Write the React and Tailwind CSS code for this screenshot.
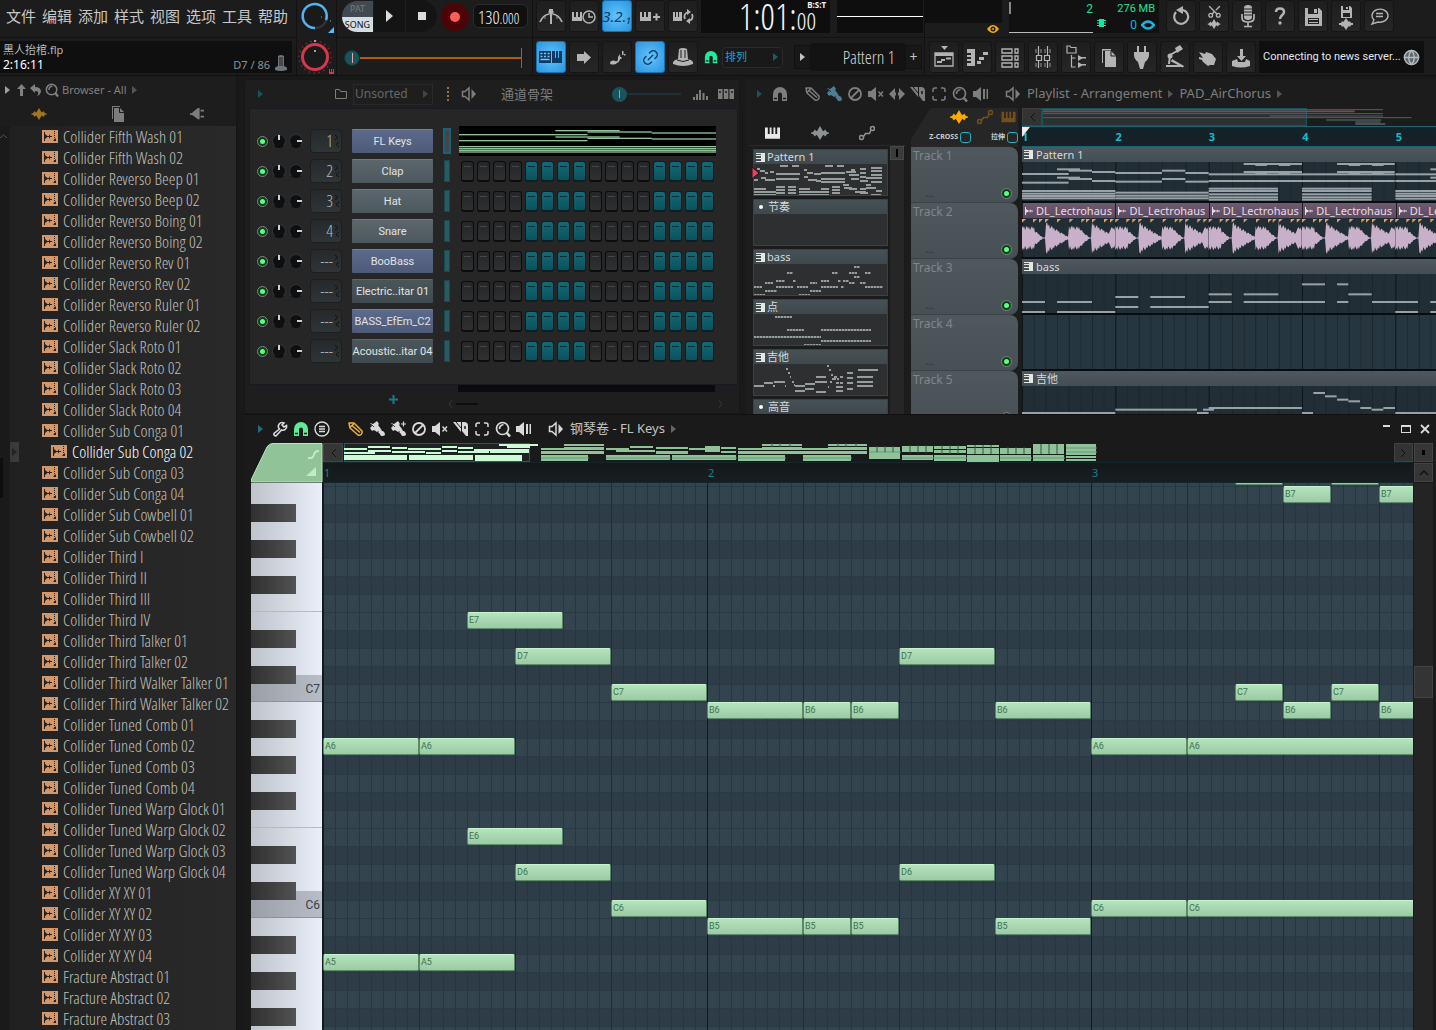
import React from "react";
import { Scissors, Link2, Globe } from "lucide-react";

const menuItems = ["文件", "编辑", "添加", "样式", "视图", "选项", "工具", "帮助"];

const samples = [
  "Collider Fifth Wash 01",
  "Collider Fifth Wash 02",
  "Collider Reverso Beep 01",
  "Collider Reverso Beep 02",
  "Collider Reverso Boing 01",
  "Collider Reverso Boing 02",
  "Collider Reverso Rev 01",
  "Collider Reverso Rev 02",
  "Collider Reverso Ruler 01",
  "Collider Reverso Ruler 02",
  "Collider Slack Roto 01",
  "Collider Slack Roto 02",
  "Collider Slack Roto 03",
  "Collider Slack Roto 04",
  "Collider Sub Conga 01",
  "Collider Sub Conga 02",
  "Collider Sub Conga 03",
  "Collider Sub Conga 04",
  "Collider Sub Cowbell 01",
  "Collider Sub Cowbell 02",
  "Collider Third I",
  "Collider Third II",
  "Collider Third III",
  "Collider Third IV",
  "Collider Third Talker 01",
  "Collider Third Talker 02",
  "Collider Third Walker Talker 01",
  "Collider Third Walker Talker 02",
  "Collider Tuned Comb 01",
  "Collider Tuned Comb 02",
  "Collider Tuned Comb 03",
  "Collider Tuned Comb 04",
  "Collider Tuned Warp Glock 01",
  "Collider Tuned Warp Glock 02",
  "Collider Tuned Warp Glock 03",
  "Collider Tuned Warp Glock 04",
  "Collider XY XY 01",
  "Collider XY XY 02",
  "Collider XY XY 03",
  "Collider XY XY 04",
  "Fracture Abstract 01",
  "Fracture Abstract 02",
  "Fracture Abstract 03",
];

const channels = [
  { no: "1", name: "FL Keys", tone: "blue", piano: true },
  { no: "2", name: "Clap", tone: "gray" },
  { no: "3", name: "Hat", tone: "gray" },
  { no: "4", name: "Snare", tone: "gray" },
  { no: "---", name: "BooBass", tone: "blue" },
  { no: "---", name: "Electric..itar 01", tone: "dark" },
  { no: "---", name: "BASS_EfEm_C2", tone: "blue" },
  { no: "---", name: "Acoustic..itar 04", tone: "dark" },
];

const tones = {
  blue: "bg-linear-to-b from-[#5c6a8b] to-[#4e5a79] border-[#7281a3]",
  gray: "bg-linear-to-b from-[#5c676d] to-[#4d585d] border-[#717c82]",
  dark: "bg-linear-to-b from-[#4b565b] to-[#3f4a4e] border-[#5c676c]",
};

const narrow =
  "font-[Open_Sans_Condensed_Light,Noto_Sans_Condensed,Roboto_Condensed,Liberation_Sans_Narrow,Roboto,sans-serif]";

// [x1, x2, y] in thirds of a pixel, a bar is 280 wide
const patternNotes = [
  [0, 140, 36], [0, 140, 62], [105, 174, 22], [105, 174, 47], [140, 210, 26], [140, 210, 51],
  [210, 280, 30], [210, 280, 57], [280, 420, 33], [280, 420, 59], [420, 490, 26], [420, 490, 51],
  [490, 560, 33], [490, 560, 59], [560, 1118, 37], [560, 1118, 57],
  [665, 840, 6], [665, 840, 30], [945, 1118, 6], [945, 1118, 30], [700, 735, 9], [770, 805, 9],
  [980, 1015, 9], [1050, 1085, 9], [700, 735, 33], [770, 805, 33], [980, 1015, 33], [1050, 1085, 33],
  [0, 280, 87], [0, 280, 95], [0, 280, 102], [0, 280, 109],
  [280, 560, 92], [280, 560, 101], [280, 560, 109],
  [560, 768, 80], [560, 768, 87], [560, 768, 97], [560, 768, 106], [560, 768, 113],
  [840, 1049, 80], [840, 1049, 87], [840, 1049, 97], [840, 1049, 106], [840, 1049, 113],
  [1120, 1400, 87], [1120, 1400, 95], [1120, 1400, 102], [1120, 1400, 110],
  [1120, 1400, 37], [1120, 1400, 57], [1225, 1400, 22], [1225, 1400, 47],
];

const bassNotes = [
  [0, 69, 84], [105, 210, 84], [0, 69, 114], [105, 280, 114],
  [280, 349, 69], [385, 489, 69], [280, 349, 99], [385, 560, 99],
  [560, 629, 61], [665, 769, 61], [560, 629, 84], [665, 909, 84],
  [840, 909, 31], [945, 979, 31], [979, 1049, 61], [945, 979, 84],
  [1050, 1188, 84], [1120, 1188, 114], [1225, 1400, 84], [1225, 1400, 114],
];

const guitarNotes = [
  [0, 280, 81], [280, 525, 71], [525, 560, 81], [543, 576, 71], [560, 840, 66],
  [840, 873, 81], [874, 909, 21], [909, 944, 31], [945, 979, 41], [979, 1014, 46],
  [1015, 1048, 66], [1049, 1084, 71], [1084, 1119, 66], [1120, 1400, 81],
];

// [x, y, width] inside the 135 x 33 thumbnails
const pickers = [
  {
    name: "Pattern 1",
    keys: true,
    thumb: [
      [26, 1, 8], [38, 1, 7], [71, 1, 8], [83, 1, 7], [3, 4, 3], [6, 6, 5], [11, 8, 3], [16, 7, 4], [22, 9, 24],
      [50, 5, 3], [53, 8, 6], [60, 9, 7], [67, 8, 24], [92, 7, 10], [95, 10, 10], [0, 15, 4], [7, 13, 5], [11, 15, 10],
      [22, 14, 23], [50, 12, 4], [54, 15, 9], [62, 16, 5], [67, 14, 24], [67, 17, 24], [89, 20, 6], [90, 23, 8],
      [0, 24, 12], [0, 27, 22], [0, 30, 22], [22, 22, 9], [22, 25, 9], [22, 28, 9], [22, 31, 9],
      [34, 22, 8], [34, 25, 8], [34, 28, 8], [34, 31, 8], [45, 24, 11], [45, 27, 22], [45, 30, 22],
      [67, 24, 8], [78, 22, 8], [67, 27, 8], [78, 25, 8], [67, 30, 8], [78, 28, 8], [78, 31, 8],
      [97, 5, 4], [97, 14, 8], [95, 24, 8], [101, 27, 11], [106, 4, 6], [106, 8, 6], [106, 12, 6], [106, 16, 8],
      [106, 24, 6], [106, 28, 8], [106, 31, 8], [117, 3, 11], [117, 6, 11], [117, 10, 11], [112, 13, 16],
      [117, 17, 11], [112, 20, 5], [112, 23, 10], [122, 26, 6], [117, 30, 10],
    ],
  },
  { name: "节奏", keys: false, thumb: [] },
  {
    name: "bass",
    keys: true,
    dashed: true,
    thumb: [
      [100, 2, 6], [33, 8, 6], [78, 8, 6], [95, 8, 8], [111, 8, 6], [100, 12, 6], [11, 18, 8], [22, 16, 9],
      [39, 16, 3], [56, 18, 7], [67, 16, 8], [84, 16, 3], [89, 16, 6], [95, 18, 6], [106, 18, 6], [0, 22, 8],
      [22, 22, 17], [43, 22, 11], [67, 22, 17], [87, 22, 3], [111, 22, 18], [11, 26, 12], [56, 26, 11], [0, 30, 11], [45, 30, 11],
    ],
  },
  {
    name: "点",
    keys: true,
    dashed: true,
    thumb: [[21, 2, 17], [33, 15, 17], [67, 15, 50], [0, 22, 67], [67, 26, 50], [50, 30, 17]],
  },
  {
    name: "吉他",
    keys: true,
    thumb: [
      [0, 21, 10], [10, 18, 9], [20, 17, 11], [19, 21, 2], [32, 4, 2], [34, 8, 2], [36, 12, 1], [31, 21, 1], [38, 17, 2], [40, 20, 1],
      [41, 21, 10], [51, 19, 10], [41, 26, 10], [51, 24, 9], [61, 17, 12], [62, 12, 10], [62, 27, 10], [73, 1, 2], [75, 5, 2],
      [77, 10, 2], [78, 14, 4], [80, 12, 3], [76, 17, 2], [83, 14, 2], [82, 18, 3], [86, 12, 3], [86, 18, 3], [82, 22, 7], [82, 26, 7],
      [78, 31, 2], [93, 8, 6], [93, 13, 6], [93, 18, 6], [93, 24, 6], [104, 5, 20], [103, 12, 16], [103, 17, 16], [103, 21, 16], [74, 22, 1],
    ],
  },
  { name: "高音", keys: false, thumb: [] },
];

// start and length in steps, row counted down from B7
const upperNotes = [
  ["A", 0, 8, 14], ["A", 8, 8, 14], ["E", 12, 8, 7], ["D", 16, 8, 9], ["C", 24, 8, 11],
  ["B", 32, 8, 12], ["B", 40, 4, 12], ["B", 44, 4, 12], ["D", 48, 8, 9], ["B", 56, 8, 12],
];
const pianoNotes = [
  ...upperNotes.map(([n, s, l, r]) => [n + (r > 11 ? 6 : 7), s, l, r]),
  ...upperNotes.map(([n, s, l, r]) => [n + (r > 11 ? 5 : 6), s, l, r + 12]),
  ["A6", 64, 8, 14],
  ["A6", 72, 24, 14],
  ["C6", 64, 8, 23],
  ["C6", 72, 24, 23],
  ["C7", 76, 4, 11],
  ["C7", 84, 4, 11],
  ["B6", 80, 4, 12],
  ["B6", 88, 4, 12],
  ["B7", 80, 4, 0],
  ["B7", 88, 4, 0],
  ["", 76, 4, -1],
  ["", 84, 4, -1],
];

const scale = ["B", "A#", "A", "G#", "G", "F#", "F", "E", "D#", "D", "C#", "C"];
const keyRows = Array.from({ length: 31 }, (_, i) => ({
  note: scale[i % 12],
  octave: 7 - Math.floor(i / 12),
}));

/* ---------- icons ---------- */

const Icon = ({ children, className = "w-4 h-4", box = "0 0 16 16" }) => (
  <svg
    viewBox={box}
    className={`shrink-0 ${className}`}
    fill="currentColor"
    stroke="none"
    aria-hidden="true"
  >
    {children}
  </svg>
);

const line = { fill: "none", stroke: "currentColor" };

const Arrow = ({ className = "text-[#666]" }) => (
  <Icon className={`w-[5px] h-2 ${className}`} box="0 0 5 8">
    <path d="M0 0l5 4-5 4z" />
  </Icon>
);

const MagnetIcon = ({ className }) => (
  <Icon className={className}>
    <path d="M1 15V8a7 7 0 0 1 14 0v7h-5V8.500a2 2 0 0 0-4 0V15z" />
    <path d="M2 12.500h3M11 12.500h3" stroke="#1c1c1c" strokeWidth="1.500" />
  </Icon>
);

const PencilIcon = () => (
  <Icon>
    <g {...line} strokeWidth="1.500" strokeLinejoin="round">
      <path d="M1 2l1 5 8 7c2 1 5-1 4-4L6 2z" />
      <path d="M4 4.500l8 7M2 6.500l4-4" />
    </g>
  </Icon>
);

const BrushIcon = ({ plus }) => (
  <Icon>
    <path d="M1 2l3 1 4-3 2 3-1 1 3 4-4 3-3-2-2 1-2-3 2-2zM9 11l3-3 1 2c2 0 3 2 3 4-2 2-5 1-5-1z" />
    <path d="M9.500 8.500l3 3" {...line} strokeWidth="1.500" />
    <path d="M2 3l3 3" stroke="#1c1c1c" strokeWidth=".8" />
    {plus && <path d="M11 3h5M13.500 .5v5" {...line} strokeWidth="1.200" />}
  </Icon>
);

const BanIcon = () => (
  <Icon>
    <g {...line} strokeWidth="1.800">
      <circle cx="8" cy="8" r="6" />
      <path d="M4 12l8-8" />
    </g>
  </Icon>
);

const MuteIcon = () => (
  <Icon>
    <path d="M0 5h3l5-4v14l-5-4H0z" />
    <path d="M10.500 5.500l4.500 5M15 5.500l-4.500 5" {...line} strokeWidth="1.400" />
  </Icon>
);

const SlipIcon = () => (
  <Icon>
    <path d="M0 8l6-6v4.500h1v3H6V14zM16 8l-6-6v4.500H9v3h1V14z" />
  </Icon>
);

const SliceIcon = () => (
  <Icon>
    <path d="M0 1l8 10V1z" />
    <path d="M3 1l5 6" stroke="#1c1c1c" />
    <path d="M9 1h2q4 0 4 4v10h-2L9 10z" />
    <path d="M12 5v3" stroke="#1c1c1c" strokeWidth="1.500" />
  </Icon>
);

const SelectIcon = () => (
  <Icon>
    <path
      d="M2 6V4q0-2 2-2h2M10 2h2q2 0 2 2v2M14 10v2q0 2-2 2h-2M6 14H4q-2 0-2-2v-2"
      {...line}
      strokeWidth="1.500"
    />
  </Icon>
);

const ZoomIcon = ({ className }) => (
  <Icon className={className}>
    <g {...line} strokeWidth="1.700">
      <circle cx="7.500" cy="7.500" r="6" />
      <path d="M11.500 11.500l3.500 4" strokeWidth="2.500" />
      <path d="M4.500 8c0-3 1-4 4-4.500" />
    </g>
  </Icon>
);

const PlaybackIcon = () => (
  <Icon>
    <path d="M0 5h3l5-4v14l-5-4H0zM10 3h2v10h-2zM13.500 3h1.500v10h-1.500z" />
  </Icon>
);

const SpeakerIcon = () => (
  <Icon>
    <path d="M1.500 5.500h2.500l4-3.500v12l-4-3.500H1.500z" {...line} strokeWidth="1.500" />
    <path d="M10.500 3l4.500 5-4.500 5z" />
  </Icon>
);

const WrenchIcon = () => (
  <Icon>
    <path
      d="M14.500 4.500a3.800 3.800 0 0 1-5 4.500l-5 5.500c-1.500 1-3-.5-2.500-2l5.500-4.500a3.800 3.800 0 0 1 4.500-6L10 4l2 2z"
      {...line}
      strokeWidth="1.600"
    />
  </Icon>
);

const MenuIcon = () => (
  <Icon>
    <g {...line} strokeWidth="1.400">
      <circle cx="8" cy="8" r="7" />
      <path d="M5 5.500h6M5 8h6M5 10.500h6" />
    </g>
  </Icon>
);

const WaveIcon = ({ className = "w-5 h-4" }) => (
  <Icon box="0 0 20 16" className={className}>
    <path d="M0 7h2l2-3 2 2 1-1 3-5 3 5 1 1 2-2 2 3h2v2h-2l-2 3-2-2-1 1-3 5-3-5-1-1-2 2-2-3H0z" />
  </Icon>
);

const AutomationIcon = () => (
  <Icon>
    <g {...line} strokeWidth="1.500">
      <circle cx="2.500" cy="12.500" r="2" />
      <circle cx="13.500" cy="3.500" r="2" />
      <path d="M4.500 11.500l2-3h4l1.500-3.500" />
    </g>
  </Icon>
);

const PianoIcon = ({ className = "w-4 h-4" }) => (
  <Icon className={className}>
    <path d="M0 2h3v7h2V2h2v7h2V2h2v7h2V2h3v12H0z" />
  </Icon>
);

const FilesIcon = ({ className = "w-4 h-4" }) => (
  <Icon className={className}>
    <path d="M2 0h8v1H3v12H2z" />
    <path d="M4 2h6l4 4v10H4z" />
    <path d="M9.500 2v4.500H14" fill="none" stroke="#1c1c1c" />
  </Icon>
);

const ClipIcon = () => (
  <Icon className="w-[9px] h-[9px] text-[#e3e8e0]" box="0 0 9 9">
    <path d="M0 0h9v9H0V8h5V6H0V5h5V3H0V2h5V1H0z" />
  </Icon>
);

const SampleIcon = () => (
  <Icon className="w-4 h-[13px]" box="0 0 16 13">
    <path d="M0 0h16v13H0z" fill="#d0986c" />
    <path d="M2 2h1v9H2zM3 4l3 2.500L3 9zM3 6h7v1H3zM7 4l1.500 2.500L7 9z" fill="#2a211b" />
    <path d="M12.500 1v9" stroke="#2a211b" strokeDasharray="1 1" />
    <path d="M14 8v3h-3z" fill="#2a211b" />
  </Icon>
);

/* artwork of the 30 x 32 toolbar buttons */
const art = {
  metronome: (
    <>
      <path d="M4 22q3-7 9-8M26 22q-3-7-9-8" {...line} strokeWidth="1.700" />
      <path d="M13 9h4v4l-1 3v8h-2v-8l-1-3z" />
      <path d="M12 12h6" {...line} />
      <path d="M9 15v4M21 15v4" {...line} strokeWidth=".8" />
    </>
  ),
  wait: (
    <>
      <path d="M3 12h2v5h2v-5h2v5h2v-5h2v9H3z" />
      <g {...line} strokeWidth="1.500">
        <circle cx="20" cy="17" r="6" />
        <path d="M20 13v4h4" />
      </g>
    </>
  ),
  overdub: (
    <>
      <path d="M5 12h2v5h2v-5h2v5h2v-5h3v9H5z" />
      <path d="M18 16h7v2h-7zM20.500 13.500h2v7h-2z" />
    </>
  ),
  loop: (
    <>
      <path d="M5 12h2v5h1v-5h2v5h1v-5h3v9H5z" />
      <path d="M17 19q-2-5 3-7M24 14q2 5-3 7" {...line} strokeWidth="1.800" />
      <path d="M19 9l4 3-4 3zM22 18l-4 3 4 3z" />
    </>
  ),
  typing: (
    <>
      <path d="M3 10h12v12H3z" />
      <path
        d="M4.500 12.500h2M8 12.500h2M11.500 12.500h2M4.500 15.500h2M8 15.500h2M11.500 15.500h2M4.500 18.500h9"
        stroke="#7cc4f5"
        strokeWidth="1.500"
      />
      <path d="M16 10h3v7h1v-7h2v7h1v-7h3v12H16z" />
    </>
  ),
  step: <path d="M8 13h7v-3l7 6.500-7 6.500v-3H8z" />,
  slide: (
    <>
      <path d="M8 22c0-2 3-3 5-2 3 1 3-1 3-4l2-3q1 8-3 9c-2 2-7 2-7 0z" />
      <path d="M20 10h1.500v4H20zM18 16h1.500v2H18zM22 13h1.500v1.500H22z" />
    </>
  ),
  stamp: (
    <>
      <path d="M11 8q4-2 8 0l1 10q4 1 5 3v2q-10 4-20 0v-2q1-2 5-3z" />
      <path d="M13 9v8M17 9v8M9 19q6 3 12 0" stroke="#1c1c1c" fill="none" />
    </>
  ),
  undo: (
    <>
      <path d="M10 12a7 7 0 1 0 7-2" {...line} strokeWidth="2.200" />
      <path d="M10 10l7-4v8z" />
    </>
  ),
  mic: (
    <>
      <path d="M12 8q0-3 4-3t4 3v9q0 3-4 3t-4-3z" />
      <path d="M10 14v4q0 4 6 4t6-4v-4M16 22v4M12 26.500h8" {...line} strokeWidth="1.700" />
      <path d="M12 9h8M12 12h8M12 15h8" stroke="#222" />
    </>
  ),
  help: (
    <>
      <path d="M11 12q0-3.500 4-3.500t4 3.500c0 3-4 3-4 7" {...line} strokeWidth="2.500" />
      <circle cx="15" cy="23" r="1.700" />
    </>
  ),
  save: (
    <path d="M7 8h14l3 3v15H7zM10 8v6h10V8zM10 18v6h11v-6zM16 9h3v4h-3zM11 19h9v1h-9zM11 22h9v1h-9z" fillRule="evenodd" />
  ),
  saveAs: (
    <>
      <path d="M10 6h9l2 2v10H10zM12 6v4h6V6zM12 13v4h7v-4zM15 7h2v2h-2z" fillRule="evenodd" />
      <path d="M8 23h2l1-2 1 1 1-1 2-3 2 3 1 1 1-1 1 2h2v2h-2l-1 2-1-1-1 1-2 3-2-3-1-1-1 1-1-2H8z" />
    </>
  ),
  playlist: (
    <>
      <path d="M12 5h7l-3.500 4zM6 12h18v3H6z" />
      <path d="M6 12h18v13H6z" {...line} strokeWidth="1.300" />
      <path d="M8 20h5v2H8zM12 18h4v2h-4zM17 16.500h5v2h-5z" />
    </>
  ),
  piano: (
    <>
      <path d="M5 8h8v17H5v-3h4v-2H5v-2h4v-2H5v-2h4v-2H5z" />
      <path d="M15 20h4v3h-4zM17 16h5v3h-5zM21 11h5v3h-5z" />
    </>
  ),
  rack: (
    <g {...line} strokeWidth="1.300">
      <path d="M7 8h10v4H7zM7 15h10v4H7zM7 22h10v4H7zM20 8h3v4h-3zM20 15h3v4h-3zM20 22h3v4h-3z" />
    </g>
  ),
  mixer: (
    <g {...line} strokeWidth="1.200">
      <path d="M10.500 5v9M10.500 20v7M19.500 5v9M19.500 20v7M8.500 14.500h5v5h-5zM16.500 14.500h5v5h-5z" />
      <path d="M8 8v4M13 8v4M17 8v4M22 8v4M8 22v4M13 22v4M17 22v4M22 22v4" strokeWidth=".8" />
    </g>
  ),
  tree: (
    <>
      <path d="M6 5h3l1 1.500h5V12H6zM10.500 14v12h4M10.500 17h4" {...line} strokeWidth="1.200" />
      <path d="M17 14l5 3-5 3zM17 21l5 3-5 3zM20 16h5v1.500h-5zM20 23h5v1.500h-5z" />
    </>
  ),
  files: (
    <>
      <path d="M8 8h9v1.500h-8V22H8z" />
      <path d="M11 10h6l5 5v11H11z" />
      <path d="M17 9.500V15h5.500" stroke="#1c1c1c" fill="none" />
    </>
  ),
  plug: <path d="M10 5h2v6h5V5h2v6h3v3q0 4-4 7l-2 7h-3l-2-7q-4-3-4-7v-3h3z" />,
  tool: (
    <>
      <path d="M15 7l5-3 3 4-6 4z" />
      <path d="M17 10l-7 4-1 9" {...line} strokeWidth="2" />
      <path d="M6 24h17v2H6zM12 18l12 7-1 1.500-12-6z" />
      <circle cx="10" cy="15" r="2.500" />
    </>
  ),
  hand: <path d="M6 11l6 2 1-2 6 2 4 5-2 6h-4l-2 1-5-4-1-2-3-1v-2l4 1z" />,
  install: (
    <>
      <path d="M14 8h3v7h3l-4.500 5-4.500-5h3z" />
      <path d="M6 20l5-2 1 3h7l1-3 4 2v5q-9 3-18 0z" />
    </>
  ),
};

const ToolButton = ({ label, icon, active, children }) => (
  <button
    type="button"
    aria-label={label}
    className={`w-[30px] h-8 rounded-[3px] flex items-center justify-center shrink-0 border ${
      active
        ? "bg-[radial-gradient(#63c5ff,#2a94de)] border-[#1672b3] text-[#0d3a63]"
        : "bg-linear-to-b from-[#1e1e1e] to-[#262626] border-[#151515] text-[#b4b4b4]"
    }`}
  >
    {icon ? (
      <svg viewBox="0 0 30 32" className="w-[30px] h-8 shrink-0" fill="currentColor" aria-hidden="true">
        {art[icon]}
      </svg>
    ) : (
      children
    )}
  </button>
);

const SlotButton = ({ label, className = "", children }) => (
  <button
    type="button"
    aria-label={label}
    className={`w-[21px] h-5 flex items-center justify-center shrink-0 ${className}`}
  >
    {children}
  </button>
);

const Led = () => (
  <span className="w-[11px] h-[11px] rounded-full border border-[#7c8a80] bg-[#123a1c] flex items-center justify-center shrink-0">
    <span className="w-[5px] h-[5px] rounded-full bg-[#59ff84]" />
  </span>
);

/* ---------- top toolbar ---------- */

const MenuSection = () => (
  <div className="w-[297px] shrink-0 border-r border-[#111]">
    <nav className="h-[38px] flex items-center gap-1 pl-[5px] pb-1.5 border-b border-[#131313]">
      {menuItems.map((item) => (
        <button key={item} type="button" className="w-8 text-[15px] leading-5 text-[#c8c8c8] whitespace-nowrap">
          {item}
        </button>
      ))}
    </nav>
    <div className="mt-[3px] h-8 mr-1 bg-[#0f0f0f] flex justify-between pl-[3px] pr-1">
      <div className="text-[11px] leading-[15px] pt-px">
        <p className="text-[#b4b8ba]">黑人抬棺.flp</p>
        <p className="text-xs leading-[15px] text-white">2:16:11</p>
      </div>
      <div className="flex items-end gap-1 pb-0.5">
        <span className="text-[11px] leading-3 text-[#8c9296]">D7 / 86</span>
        <Icon className="w-[14px] h-4 text-[#6d7378]" box="0 0 14 16">
          <path d="M4 1q3-2 6 0v10q3 1 3 2v2q-6 2-12 0v-2q0-1 3-2z" />
          <path d="M6 2v9M8 2v9" stroke="#222" />
        </Icon>
      </div>
    </div>
  </div>
);

const KnobSection = () => (
  <div className="w-10 shrink-0 border-r border-[#111]">
    <svg viewBox="0 0 38 38" className="w-[38px] h-[38px]" aria-hidden="true">
      <circle cx="18" cy="16" r="12" fill="#1a1a1a" stroke="#3a3338" strokeWidth="2" />
      <path d="M18 28A12 12 0 1 1 29 20" fill="none" stroke="#4fb4f0" strokeWidth="2.500" />
      <path d="M24 17h1M33 21h1" stroke="#4fb4f0" />
      <path d="M37 27v6h-6z" fill="#4fc0ff" />
    </svg>
    <svg viewBox="0 0 38 38" className="w-[38px] h-[38px]" aria-hidden="true">
      <circle cx="18" cy="19" r="16" fill="none" stroke="#7c2733" strokeWidth="1.500" strokeDasharray="1.500 3.500" />
      <circle cx="18" cy="19" r="12.500" fill="#1a1a1a" stroke="#d3384e" strokeWidth="3" />
      <path d="M18 12v2M18 2v2" stroke="#ccc" strokeWidth="1.500" />
      <path d="M32 31h1v3h1v-3h1v3h1v-3h1v5h-5z" fill="#d3384e" />
    </svg>
  </div>
);

const TransportSection = () => (
  <div className="w-[196px] shrink-0 border-r border-[#111]">
    <div className="h-[38px] border-b border-[#131313] flex items-start pl-[5px]">
      <button
        type="button"
        className="w-[31px] h-[31px] mt-px rounded-l-2xl overflow-hidden text-[9px] leading-[15px] flex flex-col text-center"
      >
        <span className="w-full h-4 bg-[#414a50] text-[#727a80]">PAT</span>
        <span className="w-full h-[15px] bg-[#d3dde4] text-[#111]">SONG</span>
      </button>
      <button type="button" aria-label="Play" className="w-[31px] h-8 bg-[#141414] flex items-center justify-center ml-px">
        <Icon className="w-[7px] h-3 text-[#dcdcdc]" box="0 0 7 12">
          <path d="M0 0l7 6-7 6z" />
        </Icon>
      </button>
      <button
        type="button"
        aria-label="Stop"
        className="w-8 h-8 bg-[#141414] rounded-r-2xl flex items-center justify-center border-l border-[#202020]"
      >
        <span className="w-2 h-2 bg-[#dcdcdc]" />
      </button>
      <button
        type="button"
        aria-label="Record"
        className="w-7 h-7 mt-[3px] ml-1 rounded-full bg-[#4d0406] flex items-center justify-center"
      >
        <span className="w-[10px] h-[10px] rounded-full bg-[#fb5f5d]" />
      </button>
      <div className={`w-[55px] h-6 mt-1 ml-1 rounded-md border border-[#2b2b2b] bg-[#101010] flex items-baseline pl-1 text-[#f0f6fa] ${narrow}`}>
        <span className="text-lg leading-6">130</span>
        <span className="text-sm leading-6">.000</span>
      </div>
    </div>
    <div className="h-10 flex items-center pl-[7px]">
      <span className="w-4 h-4 rounded-full bg-[#17545c] border border-[#0d363b] flex justify-center items-center shrink-0">
        <span className="w-px h-[10px] bg-[#f2a0a0]" />
      </span>
      <span className="h-0.5 grow bg-[#b55a09]" />
      <span className="w-px h-5 bg-[#b55a09] mr-2.5" />
    </div>
  </div>
);

const CenterSection = () => (
  <div className="w-[392px] shrink-0 border-r border-[#111]">
    <div className="h-[38px] border-b border-[#131313] flex gap-[3px] pl-[3px]">
      <ToolButton label="Metronome" icon="metronome" />
      <ToolButton label="Wait for input" icon="wait" />
      <ToolButton label="Countdown" active>
        <span className="text-[15px] italic">3.2.₁</span>
      </ToolButton>
      <ToolButton label="Overdub" icon="overdub" />
      <ToolButton label="Loop record" icon="loop" />
      <div className={`w-[129px] h-[33px] bg-[#0e0e0e] flex justify-end pr-1 text-[#f0f6fa] ${narrow}`}>
        <span className="text-[36px] leading-[33px]">1:01:</span>
        <div className="flex flex-col items-end">
          <span className="text-[8px] leading-[9px] font-bold font-[Noto_Sans]">B:S:T</span>
          <span className="text-[24px] leading-[23px] pr-2.5">00</span>
        </div>
      </div>
      <div className="w-[86px] h-[33px] ml-1 bg-[#0e0e0e] flex items-center">
        <span className="h-px w-full bg-white" />
      </div>
    </div>
    <div className="h-[38px] pt-[3px] flex gap-[3px] pl-[3px]">
      <ToolButton label="Typing keyboard" icon="typing" active />
      <ToolButton label="Step editing" icon="step" />
      <ToolButton label="Slide" icon="slide" />
      <ToolButton label="Link" active>
        <Link2 size={19} strokeWidth={1.8} className="-rotate-45" />
      </ToolButton>
      <ToolButton label="Main snap" icon="stamp" />
      <div className="h-8 flex items-center pl-[3px] gap-1">
        <MagnetIcon className="w-[14px] h-[14px] text-[#18f0a0]" />
        <div className="w-[61px] h-[21px] border border-[#2b2b2b] bg-[#191919] rounded-sm flex items-center pr-1">
          <select aria-label="Snap" className="appearance-none grow w-0 pl-[2px] text-[11px] leading-4 text-[#18a4c4] outline-none">
            <option>排列</option>
          </select>
          <Arrow className="text-[#1b5b66]" />
        </div>
      </div>
      <div className="h-8 flex items-center ml-2">
        <button type="button" aria-label="Previous pattern" className="w-[17px] h-6 bg-[#181818] border border-[#111] flex items-center justify-center">
          <Arrow className="text-[#c4c4c4]" />
        </button>
        <span className={`w-[94px] h-7 bg-[#131313] text-[#d4d4d4] text-lg leading-7 text-right pr-2.5 whitespace-nowrap ${narrow}`}>
          Pattern 1
        </span>
        <button type="button" aria-label="Add pattern" className="w-[17px] h-6 bg-[#181818] border border-[#111] text-sm leading-5 text-[#c4c4c4]">
          +
        </button>
      </div>
    </div>
  </div>
);

const RightSection = () => (
  <div className="grow">
    <div className="h-[38px] border-b border-[#131313] flex gap-[3px]">
      <div className="w-[77px] flex flex-col items-end">
        <div className="w-full h-[23px] bg-[#0f0f0f]" />
        <Icon className="w-3 h-[10px] mt-px mr-[3px] text-[#f2a900]" box="0 0 12 10">
          <path d="M0 5q6-8 12 0-6 8-12 0z" />
          <circle cx="6" cy="5" r="2.500" fill="#1c1c1c" />
          <circle cx="6" cy="5" r="1" />
        </Icon>
      </div>
      <div className="w-[150px] h-[33px] ml-1 bg-[#111] flex text-xs leading-4 text-[#15e695] mr-1">
        <div className="w-[84px] border-b border-[#bbb] flex justify-between">
          <span className="w-0.5 h-3 mt-0.5 bg-[#888]" />
          <span className="pt-px font-[Roboto]">2</span>
        </div>
        <div className="w-[62px] pt-px text-right font-[Roboto]">
          <p className="text-[11px] leading-4 whitespace-nowrap">276 MB</p>
          <div className="flex items-center justify-between text-[#18b4e6]">
            <Icon className="w-[9px] h-2 ml-1 -mt-1 text-[#10eba0]" box="0 0 9 8">
              <path d="M2 0h5v8H2zM0 1h9v1H0zM0 3.500h9v1H0zM0 6h9v1H0z" />
            </Icon>
            <span className="ml-5">0</span>
            <Icon className="w-[14px] h-[10px]" box="0 0 14 10">
              <path d="M1 5q6-7 12 0-6 7-12 0z" {...line} strokeWidth="2.500" />
            </Icon>
          </div>
        </div>
      </div>
      <ToolButton label="Undo" icon="undo" />
      <ToolButton label="Cut">
        <span className="flex flex-col items-center">
          <Scissors size={15} strokeWidth={2.2} className="-rotate-90" />
          <WaveIcon className="w-[14px] h-[10px]" />
        </span>
      </ToolButton>
      <ToolButton label="Record audio" icon="mic" />
      <ToolButton label="Help" icon="help" />
      <ToolButton label="Save" icon="save" />
      <ToolButton label="Save new version" icon="saveAs" />
      <ToolButton label="Chat">
        <Icon className="w-5 h-5" box="0 0 20 20">
          <path d="M3 18l2-4a8 6.500 0 1 1 4 2z" {...line} strokeWidth="1.400" />
          <path d="M7 7.500h7M7 10.500h7" {...line} strokeWidth="1.400" />
        </Icon>
      </ToolButton>
    </div>
    <div className="h-[38px] pt-[3px] flex gap-[3px] pl-1">
      <ToolButton label="Playlist" icon="playlist" />
      <ToolButton label="Piano roll" icon="piano" />
      <ToolButton label="Channel rack" icon="rack" />
      <ToolButton label="Mixer" icon="mixer" />
      <ToolButton label="Browser" icon="tree" />
      <ToolButton label="Project picker" icon="files" />
      <ToolButton label="Plugins" icon="plug" />
      <ToolButton label="Tools" icon="tool" />
      <ToolButton label="Touch" icon="hand" />
      <ToolButton label="Install" icon="install" />
      <div className="w-[165px] h-8 bg-[#0f0f0f] flex items-center justify-between pl-1 pr-1 text-[11px] text-[#e4e8ea] whitespace-nowrap font-[Roboto]">
        <span>Connecting to news server...</span>
        <Globe size={17} className="text-[#b4bcc0] shrink-0" fill="#5e676b" />
      </div>
    </div>
  </div>
);

/* ---------- browser ---------- */

const Browser = () => (
  <aside className="w-[237px] shrink-0 flex flex-col bg-[#1d1d1d] border-r border-[#141414]">
    <div className="h-7 flex items-center gap-[3px] pl-[5px] text-[#808080]">
      <Arrow className="text-[#a0a0a0]" />
      <Icon className="w-[11px] h-3 ml-[3px]" box="0 0 11 12">
        <path d="M5.500 0l4.500 5H7v7H4V5H1z" />
      </Icon>
      <Icon className="w-3 h-3" box="0 0 12 12">
        <path d="M0 4l5-4v3q6 0 6 5-1 3-4 4 2-2 1-4 0-1-3-1v2z" />
      </Icon>
      <ZoomIcon className="w-[14px] h-[14px]" />
      <span className="text-[11px] leading-5">Browser - All</span>
      <span className="ml-0.5"><Arrow className="text-[#555]" /></span>
    </div>
    <div className="h-[22px] flex items-center justify-around text-[#7d7d7d] pb-0.5">
      <button type="button" aria-label="Sounds" className="text-[#9c7626]"><WaveIcon className="w-4 h-3" /></button>
      <button type="button" aria-label="Files"><FilesIcon /></button>
      <button type="button" aria-label="Plugins">
        <Icon className="w-4 h-[14px]">
          <path d="M0 7h2l2-2 5-4h2v13H9l-5-4-2-1H0zM12 3h4v2h-4zM12 10h4v2h-4z" />
        </Icon>
      </button>
    </div>
    <div className="grow flex min-h-0">
      <div className="w-[10px] shrink-0 bg-[#1a1a1a] pt-2">
        <Icon className="w-[7px] h-1" box="0 0 7 4">
          <path d="M0 4l3.500-3L7 4" fill="none" stroke="#555" />
        </Icon>
        <div className="w-[3px] h-10 mt-[320px] bg-[#0e0e0e]" />
      </div>
      <ul className="grow overflow-hidden bg-linear-to-r from-[#202020] via-[#262626] to-[#292929]">
        {samples.map((name) => {
          const active = name === "Collider Sub Conga 02";
          return (
            <li key={name} className="flex items-center h-[21px]">
              <span className={`h-5 w-[9px] shrink-0 flex items-center justify-center ${active ? "bg-[#3a3a3a]" : ""}`}>
                {active && <Arrow className="text-[#222]" />}
              </span>
              <span className={active ? "w-8 shrink-0" : "w-[23px] shrink-0"} />
              <SampleIcon />
              <span
                className={`ml-[5px] whitespace-nowrap text-[17px] leading-5 ${narrow} ${
                  active ? "text-white" : "text-[#c0c0ba]"
                }`}
              >
                {name}
              </span>
            </li>
          );
        })}
      </ul>
    </div>
  </aside>
);

/* ---------- channel rack ---------- */

const Knob = ({ side }) => (
  <span
    className={`w-[14px] h-[14px] rounded-full border border-[#303335] border-b-[#0c0c0c] bg-[#0e0f10] shrink-0 flex ${
      side ? "items-center justify-end" : "justify-center"
    }`}
  >
    <span className={`bg-[#c9cfd2] ${side ? "w-[5px] h-0.5" : "w-0.5 h-[5px]"}`} />
  </span>
);

const keysPreview = [
  [0, 24, 384], [0, 42, 384], [288, 12, 192], [288, 31, 192], [384, 16, 192], [384, 35, 192],
  [576, 19, 192], [576, 37, 192], [0, 60, 768], [0, 66, 768], [0, 71, 768], [0, 76, 768],
];

const ChannelRow = ({ channel }) => (
  <div className="h-[30px] flex items-center pl-[6px]">
    <Led />
    <span className="w-1 shrink-0" />
    <Knob />
    <span className="w-[3px] shrink-0" />
    <Knob side />
    <span className={`ml-[7px] w-8 h-6 rounded bg-linear-to-b from-[#26292b] to-[#2f3436] border border-[#1c1e1f] flex items-center justify-end gap-0.5 text-[#b4bcc0] text-[17px] leading-5 shrink-0 ${narrow}`}>
      {channel.no}
      <Icon className="w-1 h-3 mr-0.5 text-[#111]" box="0 0 4 12">
        <path d="M0 0l3 2.500-3 2.500M4 7L1 9.500 4 12" {...line} />
      </Icon>
    </span>
    <button
      type="button"
      className={`ml-2.5 w-[81px] h-6 border-t rounded-[1px] text-[11px] leading-[21px] text-[#e0e4e6] text-center whitespace-nowrap shrink-0 font-[Roboto] ${tones[channel.tone]}`}
    >
      {channel.name}
    </button>
    <span className="w-2 ml-2.5 flex justify-center shrink-0">
      {channel.piano ? (
        <span className="w-2 h-[26px] border-2 border-[#17647a] bg-[#4a4440]" />
      ) : (
        <span className="w-[6px] h-[22px] border border-[#174a50] bg-[#2b5a60]" />
      )}
    </span>
    {channel.piano ? (
      <svg viewBox="0 0 768 90" preserveAspectRatio="none" className="w-[257px] h-[30px] bg-black ml-2" aria-hidden="true">
        {keysPreview.map(([x, y, w], i) => (
          <rect key={i} x={x} y={y} width={w} height="4" fill="#8fc299" />
        ))}
      </svg>
    ) : (
      <div className="ml-2.5 flex gap-[3px]">
        {Array.from({ length: 16 }, (_, i) => (
          <button
            key={i}
            type="button"
            aria-label={`${channel.name} step ${i + 1}`}
            className={`w-[13px] h-[21px] rounded-[3px] border border-b-2 flex justify-center pt-1 ${
              Math.floor(i / 4) % 2
                ? "bg-linear-to-b from-[#146a76] to-[#0a525e] border-[#0a1f24]"
                : "bg-linear-to-b from-[#252627] to-[#2f3031] border-[#0c0c0c]"
            }`}
          >
            <span className={`w-[7px] h-px ${Math.floor(i / 4) % 2 ? "bg-[#062e36]" : "bg-[#454647]"}`} />
          </button>
        ))}
      </div>
    )}
  </div>
);

const ChannelRack = () => (
  <section className="w-[496px] shrink-0 mr-[5px] mt-[3px] bg-[#1e1e1e] flex flex-col border border-[#181818] rounded">
    <header className="h-7 flex items-center text-[#7d7d7d] pl-[13px] pr-[5px]">
      <Arrow className="text-[#17545c]" />
      <Icon className="w-3 h-[10px] ml-[72px]" box="0 0 12 10">
        <path d="M.5 .5h4l1 2h6v7H.5z" {...line} />
      </Icon>
      <div className="ml-1.5 w-20 h-[21px] border border-[#2a2a2a] flex items-center pr-1">
        <select aria-label="Channel group" className="appearance-none grow w-0 pl-px text-xs leading-4 text-[#666] outline-none">
          <option>Unsorted</option>
        </select>
        <Arrow className="text-[#444]" />
      </div>
      <span className="w-0.5 h-[14px] ml-[14px] bg-[repeating-linear-gradient(#94734f_0_2px,transparent_2px_4px)]" />
      <span className="ml-3 flex"><SpeakerIcon /></span>
      <h2 className="ml-6 text-[13px] leading-5">通道骨架</h2>
      <span className="ml-[59px] w-[15px] h-[15px] rounded-full bg-[#17545c] flex items-center justify-center shrink-0">
        <span className="w-px h-2 bg-[#3ec2d2]" />
      </span>
      <span className="h-0.5 w-[54px] bg-[#1d3136]" />
      <span className="grow" />
      <Icon className="w-[15px] h-[11px]" box="0 0 15 11">
        <path d="M0 8h2v3H0zM3 5h2v6H3zM6 1h2v10H6zM9.500 4h2v7h-2zM13 7h2v4h-2z" />
      </Icon>
      <Icon className="w-4 h-[10px] ml-2.5" box="0 0 16 10">
        <path d="M0 0h4.500v10H0zM5.800 0h4.500v10H5.800zM11.500 0H16v10h-4.500z" />
        <path d="M1 3h2M7 3h2M13 3h2" stroke="#1c1c1c" strokeWidth="1.500" />
      </Icon>
    </header>
    <div className="ml-1 mr-px h-[277px] pt-[17px] pl-px bg-[#262626] border border-[#191921]">
      {channels.map((channel) => (
        <ChannelRow key={channel.name} channel={channel} />
      ))}
    </div>
    <footer className="flex">
      <button type="button" aria-label="Add channel" className="ml-[144px] w-3 h-7 text-[#1d7787] flex items-center">
        <Icon className="w-[9px] h-[9px]" box="0 0 9 9">
          <path d="M3.500 0h2v3.500H9v2H5.500V9h-2V5.500H0v-2h3.500z" />
        </Icon>
      </button>
      <div className="ml-[47px] text-[#383838]">
        <div className="ml-[10px] w-[257px] h-[7px] bg-[#0b0b0b]" />
        <div className="flex items-center justify-between mt-2">
          <span className="flex items-center gap-1">
            <Icon className="w-1 h-2" box="0 0 4 8"><path d="M4 0L1 4l3 4" {...line} /></Icon>
            <span className="w-[22px] h-0.5 bg-[#0d0d0d]" />
          </span>
          <Icon className="w-1 h-2 -mr-2" box="0 0 4 8"><path d="M0 0l3 4-3 4" {...line} /></Icon>
        </div>
      </div>
    </footer>
  </section>
);

/* ---------- playlist ---------- */

const TrackBody = ({ empty, children }) => (
  <svg
    viewBox="0 0 1242 117"
    className={`w-[414px] shrink-0 block ${empty ? "h-[54px] bg-[#263641]" : "h-[39px] bg-[#222e35]"}`}
    preserveAspectRatio="none"
    aria-hidden="true"
  >
    {Array.from({ length: 36 }, (_, i) => (
      <rect key={i} x={i * 35} y="0" width="3" height="117" fill={i % 8 ? (i % 2 ? "#1e2a31" : "#1a252c") : "#0c151a"} />
    ))}
    {children}
  </svg>
);

const Notes = ({ data }) =>
  data.map(([a, b, y], i) => (
    <rect key={i} x={a} y={y - 3} width={b - a} height="6" fill="#98a2a6" />
  ));

// start, peak and whether the hit decays straight away
const hits = [
  [0, 38, false],
  [70, 50, true],
  [140, 38, false],
  [210, 48, true],
  [262, 34, false],
];
const ripple = [1, 0.78, 0.96, 0.66, 0.88];
// one bar of the drum loop, mirrored round the centre line
const wavePath = () => {
  const top = [];
  for (let x = 0; x <= 280; x += 3) {
    const [start, peak, decays] = hits.filter((h) => h[0] <= x).pop();
    const t = (x - start) / 70;
    const fade = decays ? 1 - t * 0.95 : t < 0.52 ? 1 - t * 0.2 : 1.6 - t * 1.75;
    top.push([x, peak * Math.max(0.05, fade) * ripple[(x / 3) % 5]]);
  }
  const up = top.map(([x, a]) => `${x} ${Math.round(60 - a)}`);
  const down = [...top].reverse().map(([x, a]) => `${x} ${Math.round(60 + a)}`);
  return `M${up.join("L")}L${down.join("L")}Z`;
};
const drumWave = wavePath();
const slices = [0, 33, 51, 69, 105, 142, 178, 192, 210, 246, 264];

const ClipTitle = ({ children }) => (
  <div className="h-[15px] bg-linear-to-b from-[#4e585e] to-[#434d53] flex items-center gap-[3px] pl-0.5 text-[11px] leading-[15px] text-[#d5dadc]">
    <ClipIcon />
    {children}
  </div>
);

const Track = ({ children }) => (
  <div className="h-14 border-b-2 border-[#070c10] overflow-hidden shrink-0">{children}</div>
);

const Picker = () => (
  <div className="w-[157px] shrink-0 ml-1 mr-1 flex flex-col">
    <div className="h-10 flex items-center justify-between pl-4 pr-[31px] pt-3 text-[#8d9294]">
      <button type="button" aria-label="Patterns" className="text-[#e8e8e8]"><PianoIcon className="w-[15px] h-4" /></button>
      <button type="button" aria-label="Audio"><WaveIcon className="w-5 h-[14px]" /></button>
      <button type="button" aria-label="Automation"><AutomationIcon /></button>
    </div>
    <div className="grow flex min-h-0 border-t border-[#163035]">
      <ul className="w-[140px] pl-1 pr-px pt-[3px] flex flex-col gap-[3px] overflow-hidden relative">
        {pickers.map((item) => (
          <li key={item.name} className="h-[47px] shrink-0 border border-[#3a4246] bg-[#2d2f31] overflow-hidden">
            <div className="h-[14px] bg-linear-to-b from-[#465156] to-[#3e484d] flex items-center gap-[2px] pl-0.5 text-[11px] leading-[14px] text-[#d5dadc]">
              {item.keys ? <ClipIcon /> : <span className="w-1 h-1 rounded-full bg-white mx-[3px]" />}
              {item.name}
            </div>
            <svg viewBox="0 0 135 33" className="w-[135px] h-[33px]" aria-hidden="true">
              {item.thumb.map(([x, y, w], i) => (
                <path
                  key={i}
                  d={`M${x} ${y + 1}h${w}`}
                  stroke="#979c9f"
                  strokeWidth="2"
                  strokeDasharray={item.dashed ? "2.500 .5" : undefined}
                />
              ))}
            </svg>
          </li>
        ))}
        <li className="absolute left-[3px] top-[21px]" aria-hidden="true">
          <svg viewBox="0 0 7 12" className="w-[7px] h-3"><path d="M0 0l7 6-7 6z" fill="#f0405c" stroke="#111" /></svg>
        </li>
      </ul>
      <div className="w-4 bg-[#262626] border-x border-[#1a1a1a]">
        <div className="h-[14px] bg-[#3b3b3b] border border-[#484848] flex items-center justify-center">
          <span className="w-0.5 h-2 bg-black" />
        </div>
      </div>
    </div>
  </div>
);

const Playlist = () => (
  <section className="grow min-w-0 flex flex-col bg-[#1c1c1c] mt-[3px] overflow-hidden">
    <header className="h-[29px] flex items-center text-[#7e7e7e] pl-3 shrink-0 text-[13px] whitespace-nowrap">
      <Arrow className="text-[#17545c]" />
      <SlotButton label="Snap" className="ml-[7px]"><MagnetIcon className="w-4 h-4" /></SlotButton>
      <SlotButton label="Draw" className="ml-3"><PencilIcon /></SlotButton>
      <SlotButton label="Paint" className="text-[#4d7f93]"><BrushIcon /></SlotButton>
      <SlotButton label="Delete"><BanIcon /></SlotButton>
      <SlotButton label="Mute"><MuteIcon /></SlotButton>
      <SlotButton label="Slip"><SlipIcon /></SlotButton>
      <SlotButton label="Slice"><SliceIcon /></SlotButton>
      <SlotButton label="Select"><SelectIcon /></SlotButton>
      <SlotButton label="Zoom"><ZoomIcon /></SlotButton>
      <SlotButton label="Playback"><PlaybackIcon /></SlotButton>
      <span className="ml-[14px] flex"><SpeakerIcon /></span>
      <h2 className="ml-1.5">Playlist - Arrangement</h2>
      <span className="mx-1.5"><Arrow className="text-[#555]" /></span>
      <span>PAD_AirChorus</span>
      <span className="ml-1.5"><Arrow className="text-[#555]" /></span>
    </header>
    <div className="grow flex min-h-0">
      <Picker />
      <div className="w-[107px] shrink-0 ml-px mr-1 flex flex-col">
        <div className="h-[39px] shrink-0 bg-[#262626] [clip-path:polygon(18%_0,100%_0,100%_100%,0_100%,0_80%)] flex flex-col justify-between pb-1 text-[7px] leading-3 font-bold text-[#ccc]">
          <div className="flex justify-end items-center gap-2 pt-px pr-0.5">
            <span className="text-[#ffa800] flex"><WaveIcon className="w-5 h-[14px]" /></span>
            <span className="text-[#72501c] flex"><AutomationIcon /></span>
            <span className="text-[#72501c] flex"><PianoIcon className="w-[15px] h-[14px]" /></span>
          </div>
          <div className="flex items-center justify-end gap-0.5">
            <label htmlFor="zcross">Z-CROSS</label>
            <input id="zcross" type="checkbox" className="appearance-none w-[11px] h-[11px] border border-[#18b4c4] rounded-[3px] mr-[18px]" />
            <label htmlFor="stretch">拉伸</label>
            <input id="stretch" type="checkbox" className="appearance-none w-[11px] h-[11px] border border-[#18b4c4] rounded-[3px]" />
          </div>
        </div>
        {[1, 2, 3, 4, 5].map((n) => (
          <div
            key={n}
            className="h-14 shrink-0 bg-linear-to-b from-[#4e585d] to-[#465055] border-b border-[#3a4347] rounded-r-lg pl-0.5 pr-1.5 pb-[3px] flex flex-col justify-between"
          >
            <span className="text-xs leading-[17px] text-[#7d888d]">Track {n}</span>
            <span className="flex justify-between items-end pl-3 text-[11px] leading-3 text-[#2c3235]">
              <span>...</span>
              <Led />
            </span>
          </div>
        ))}
      </div>
      <div className="grow min-w-0 overflow-hidden flex flex-col bg-[#0c1216]">
        <div className="h-[18px] flex shrink-0 bg-[#1c1c1c]">
          <button type="button" aria-label="Scroll left" className="w-5 h-[18px] bg-[#333] border border-[#404040] text-[#888] flex items-center justify-center shrink-0">
            <Icon className="w-[5px] h-2" box="0 0 5 8"><path d="M5 0L1 4l4 4" fill="none" stroke="#111" /></Icon>
          </button>
          <svg viewBox="0 0 1182 54" className="w-[394px] h-[18px] shrink-0" aria-hidden="true">
            <rect x="1" y="1" width="792" height="52" fill="#2d3032" stroke="#135e6a" strokeWidth="3" />
            <path d="M3 5h1020M3 17h1020M3 29h1105M683 24h340" stroke="#565e63" strokeWidth="3" />
            <path d="M3 10h935" stroke="#6c5063" strokeWidth="5" />
            <path d="M853 36h165M940 42h75" stroke="#4a555e" strokeWidth="4" />
            <path d="M940 48h90" stroke="#595950" strokeWidth="5" />
          </svg>
        </div>
        <div className="h-[21px] shrink-0 bg-linear-to-b from-[#10242a] to-[#182024] border-y border-[#156671] flex text-[11px] leading-[20px] font-bold text-[#19b9cc]">
          <div className="w-[467px] shrink-0 flex">
            {[1, 2, 3, 4, 5].map((n) => (
              <span key={n} className="flex-1 relative">
                {n === 1 && (
                  <span className="absolute left-0 top-0">
                    <Icon className="w-2 h-[10px] text-[#eee]" box="0 0 8 10"><path d="M0 0h8L0 10z" /></Icon>
                  </span>
                )}
                {n}
              </span>
            ))}
          </div>
        </div>
        <Track>
          <ClipTitle>Pattern 1</ClipTitle>
          <TrackBody><Notes data={patternNotes} /></TrackBody>
        </Track>
        <Track>
          <div className="w-[467px] flex">
            {[0, 1, 2, 3, 4].map((n) => (
              <div
                key={n}
                className="flex-1 min-w-0 h-[15px] bg-linear-to-b from-[#6f5a70] to-[#5e4b60] border-l border-[#231c26] flex items-center gap-[3px] pl-0.5 text-[11px] leading-[15px] text-[#e6dde6] whitespace-nowrap overflow-hidden"
              >
                <Icon className="w-2 h-2" box="0 0 8 8"><path d="M0 0h1v8H0zM1 2l3 2-3 2zM3 3.500h5v1H3zM5 2l1 2-1 2z" /></Icon>
                DL_Lectrohaus
              </div>
            ))}
          </div>
          <TrackBody>
            {[0, 1, 2, 3, 4].map((n) => (
              <g key={n} transform={`translate(${n * 280} 0)`}>
                <path d={drumWave} fill="#c9b0ca" />
                {slices.map((x) => (
                  <path key={x} d={`M${x} 3h12l-12 11z`} fill="#e0a066" />
                ))}
              </g>
            ))}
          </TrackBody>
        </Track>
        <Track>
          <ClipTitle>bass</ClipTitle>
          <TrackBody><Notes data={bassNotes} /></TrackBody>
        </Track>
        <Track>
          <TrackBody empty />
        </Track>
        <Track>
          <ClipTitle>吉他</ClipTitle>
          <TrackBody><Notes data={guitarNotes} /></TrackBody>
        </Track>
      </div>
    </div>
  </section>
);

/* ---------- piano roll ---------- */

// [x, y, width, height] on a 753 x 19 strip
const overview = [
  [0, 5, 24, 2], [24, 3, 23, 2], [0, 9, 32, 2], [24, 7, 24, 2], [48, 4, 16, 2], [48, 8, 34, 2], [64, 5, 34, 2], [98, 3, 16, 2], [98, 7, 16, 2],
  [82, 9, 16, 2], [114, 4, 16, 2], [114, 8, 32, 2], [130, 6, 56, 2], [146, 8, 40, 2], [155, 1, 40, 2], [163, 3, 24, 2],
  [0, 12, 64, 5], [65, 12, 65, 5], [131, 12, 48, 6], [197, 12, 48, 6], [262, 12, 65, 5], [328, 12, 65, 5],
  [197, 5, 64, 2], [197, 8, 64, 3], [220, 1, 41, 2], [220, 4, 41, 2], [262, 5, 24, 2], [286, 3, 24, 2], [272, 7, 40, 2],
  [312, 4, 33, 2], [312, 8, 33, 3], [345, 5, 32, 2], [361, 3, 16, 2], [361, 7, 16, 2], [377, 4, 16, 2], [377, 8, 16, 2],
  [394, 5, 130, 2], [394, 8, 130, 3], [418, 1, 41, 2], [418, 4, 41, 1], [484, 1, 40, 2], [484, 4, 40, 1], [394, 12, 48, 6], [459, 12, 49, 6],
  [525, 4, 32, 12], [558, 3, 32, 6], [558, 12, 32, 5], [590, 3, 33, 3], [590, 7, 33, 3], [590, 12, 33, 6],
  [623, 2, 33, 2], [623, 5, 33, 6], [623, 12, 33, 7], [656, 5, 32, 6], [656, 12, 32, 6],
  [689, 1, 32, 10], [689, 12, 32, 6], [722, 1, 31, 11], [722, 13, 31, 2], [722, 16, 31, 2],
];

const PianoKey = ({ note, octave }) => {
  if (note.length === 2) {
    return (
      <div className={`h-[18px] shrink-0 ${note === "C#" ? "bg-linear-to-b from-transparent from-50% to-[#5a5f68]/35 to-50%" : ""}`}>
        <div className="w-[45px] h-[18px] bg-linear-to-r from-[#303030] to-[#525252]" />
      </div>
    );
  }
  return (
    <div
      className={`h-[18px] shrink-0 text-right pr-0.5 text-xs text-[#3a3d44] font-[Roboto] ${
        note === "C" ? "bg-[#5a5f68]/35 border-b border-[#8d929b]" : ""
      } ${note === "F" ? "border-b border-[#b4b9c2]" : ""}`}
    >
      {note === "C" && <span className="block leading-[10px]">{note + octave}</span>}
    </div>
  );
};

const PianoRoll = () => (
  <section className="grow min-h-0 flex flex-col bg-[#1a1a1a] border-t border-[#101010] pl-[7px]">
    <header className="h-7 shrink-0 flex items-center text-[#dadada] pl-[7px] pr-[3px] text-[13px] whitespace-nowrap">
      <Arrow className="text-[#187080]" />
      <SlotButton label="Tools" className="ml-1.5"><WrenchIcon /></SlotButton>
      <SlotButton label="Snap" className="text-[#5eeb98]"><MagnetIcon className="w-4 h-4" /></SlotButton>
      <SlotButton label="Stamp"><MenuIcon /></SlotButton>
      <SlotButton label="Draw" className="ml-[13px] text-[#f2b13c]"><PencilIcon /></SlotButton>
      <SlotButton label="Paint"><BrushIcon /></SlotButton>
      <SlotButton label="Paint drum sequence"><BrushIcon plus /></SlotButton>
      <SlotButton label="Delete"><BanIcon /></SlotButton>
      <SlotButton label="Mute"><MuteIcon /></SlotButton>
      <SlotButton label="Slice"><SliceIcon /></SlotButton>
      <SlotButton label="Select"><SelectIcon /></SlotButton>
      <SlotButton label="Zoom"><ZoomIcon /></SlotButton>
      <SlotButton label="Playback"><PlaybackIcon /></SlotButton>
      <span className="ml-[14px] mr-1.5 flex"><SpeakerIcon /></span>
      <h2 className="text-[#c2c2c2]">钢琴卷 - FL Keys</h2>
      <span className="ml-1.5"><Arrow /></span>
      <span className="grow" />
      <button type="button" aria-label="Minimise" className="w-5 h-4 flex justify-center pt-1"><span className="w-[7px] h-0.5 bg-current" /></button>
      <button type="button" aria-label="Maximise" className="w-5 h-4 flex justify-center items-center"><span className="w-[10px] h-2 border border-t-2" /></button>
      <button type="button" aria-label="Close" className="w-[17px] h-4 flex justify-center items-center">
        <Icon className="w-[10px] h-[10px]" box="0 0 10 10"><path d="M1 1l8 8M9 1L1 9" {...line} strokeWidth="1.800" /></Icon>
      </button>
    </header>
    <div className="h-10 shrink-0 flex">
      <svg viewBox="0 0 72 40" className="w-[72px] h-10 shrink-0" aria-hidden="true">
        <path d="M.5 39V36L16 4q2-3.500 6-3.500h49V39z" fill="#90c398" stroke="#b6e6bf" />
        <path d="M57 15h3q2 0 3-3.500T67 8h1" fill="none" stroke="#b6f0c4" strokeWidth="2" />
        <path d="M65 24v9H55z" fill="#b6f0c4" />
      </svg>
      <div className="grow min-w-0 flex flex-col">
        <div className="h-5 flex">
          <button type="button" aria-label="Scroll left" className="w-5 h-[19px] bg-[#363636] border border-[#444] flex items-center justify-center shrink-0">
            <Icon className="w-[5px] h-2" box="0 0 5 8"><path d="M5 0L1 4l4 4" fill="none" stroke="#111" /></Icon>
          </button>
          <svg viewBox="0 0 753 19" className="w-[753px] h-[19px] shrink-0 ml-px" aria-hidden="true">
            <rect x=".5" y=".5" width="185" height="18" fill="#1d2222" stroke="#175f6a" />
            {overview.map(([x, y, w, h], i) => (
              <rect key={i} x={x} y={y} width={w - 1} height={h} fill={x < 180 ? "#cdfbd6" : "#8fc299"} />
            ))}
            <path d="M197 15h48M262 15h65M328 15h65M394 15h48M459 15h49M558 15h32M590 15h33M656 15h32M689 15h32M525 9h32M722 5h31M722 9h31" stroke="#699a74" />
            <path d="M533 3v6M541 3v6M549 3v6M566 2v8M574 2v8M582 2v8M598 2v9M606 2v9M614 2v9M631 2v9M639 2v9M647 2v9M664 4v7M672 4v7M680 4v7M697 1v10M705 1v10M713 1v10M428 0v4M436 0v4M446 0v4M494 0v4M502 0v4M512 0v4" stroke="#35503c" />
          </svg>
          <span className="grow" />
          <button type="button" aria-label="Scroll right" className="w-[19px] h-[19px] bg-[#333] border border-[#414141] flex items-center justify-center shrink-0">
            <Icon className="w-[5px] h-2" box="0 0 5 8"><path d="M0 0l4 4-4 4" fill="none" stroke="#111" /></Icon>
          </button>
        </div>
        <div className="grow flex bg-linear-to-b from-[#12191b] to-[#1a1d1f] border-y border-[#10282c] text-[11px] leading-5 text-[#128290] overflow-hidden">
          <span className="w-96 shrink-0 pl-px">1</span>
          <span className="w-96 shrink-0 pl-px">2</span>
          <span className="w-96 shrink-0 pl-px">3</span>
        </div>
      </div>
      <div className="w-[19px] ml-px mr-[3px] flex flex-col gap-px shrink-0">
        <span className="h-[19px] bg-[#363636] border border-[#444] flex items-center justify-center"><span className="w-[3px] h-[5px] bg-black" /></span>
        <button type="button" aria-label="Scroll up" className="h-[19px] bg-[#363636] border border-[#444] flex items-center justify-center">
          <Icon className="w-[10px] h-[6px]" box="0 0 10 6"><path d="M1 5l4-4 4 4" fill="none" stroke="#111" strokeWidth="1.500" /></Icon>
        </button>
      </div>
    </div>
    <div className="grow min-h-0 flex overflow-hidden">
      <div className="w-[71px] shrink-0 bg-linear-to-r from-[#bfc3ca] to-[#eaeffa] pt-[3px] overflow-hidden">
        {keyRows.map((row) => (
          <PianoKey key={row.note + row.octave} {...row} />
        ))}
      </div>
      <div className="grow min-w-0 relative overflow-hidden bg-[#34444e] border-l border-[#101c22] pt-[3px]">
        {keyRows.map((row) => (
          <div
            key={row.note + row.octave}
            className={`h-[18px] border-t border-[#293a44] ${row.note.length === 2 ? "bg-[#2d3c46]" : "bg-[#34444e]"}`}
          />
        ))}
        <div className="absolute inset-0 bg-[image:repeating-linear-gradient(90deg,#0f1b21_0_1px,transparent_1px_384px),repeating-linear-gradient(90deg,#1e2d36_0_1px,transparent_1px_96px),repeating-linear-gradient(90deg,#273740_0_1px,transparent_1px_12px)]" />
        {pianoNotes.map(([name, start, length, row]) => (
          <div
            key={`${row}-${start}`}
            className="absolute h-[17px] rounded-[2px] bg-linear-to-b from-[#b4e4bc] to-[#9bcaa5] border border-[#5c8a68] border-t-[#c8f2ce] pl-px text-[9px] leading-[15px] text-[#3f7150] overflow-hidden font-[Roboto]"
            style={{ left: start * 12, top: row * 18 + 3, width: length * 12 }}
          >
            {name}
          </div>
        ))}
      </div>
      <div className="w-[19px] ml-px mr-[3px] shrink-0 bg-[#242424]">
        <div className="mt-[183px] h-8 bg-[#343434] border border-[#424242]" />
      </div>
    </div>
  </section>
);

const App = () => (
  <div className="h-screen flex flex-col overflow-hidden bg-[#191919] text-[#ccc] font-[Noto_Sans,Noto_Sans_CJK_SC,sans-serif]">
    <header className="h-[76px] shrink-0 flex bg-[#1c1c1c] border-b border-[#111]">
      <MenuSection />
      <KnobSection />
      <TransportSection />
      <CenterSection />
      <RightSection />
    </header>
    <main className="grow min-h-0 flex">
      <Browser />
      <div className="grow min-w-0 flex flex-col ml-[7px]">
        <div className="h-[338px] shrink-0 flex">
          <ChannelRack />
          <Playlist />
        </div>
        <PianoRoll />
      </div>
    </main>
  </div>
);

export default App;
